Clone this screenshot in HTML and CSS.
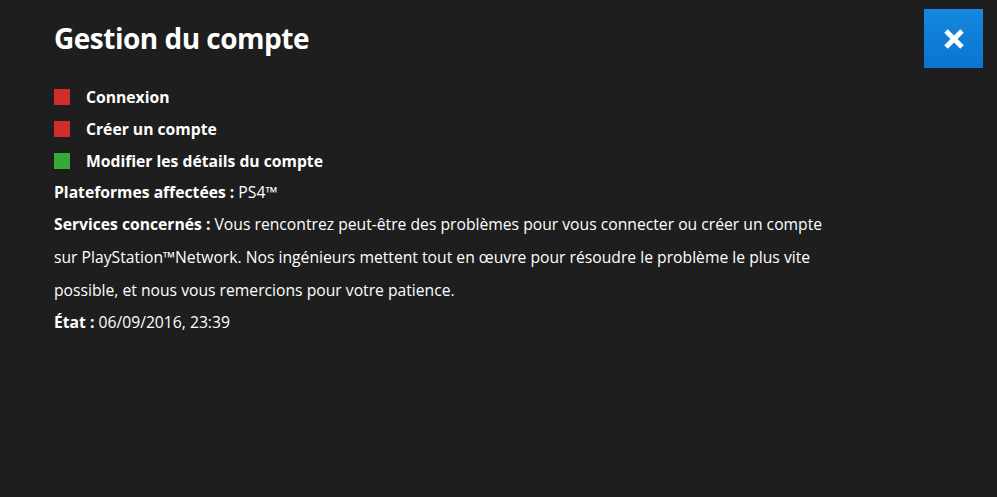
FILE: index.html
```html
<!DOCTYPE html>
<html lang="fr">
<head>
<meta charset="utf-8">
<link rel="stylesheet" href="styles.css">
</head>
<body>
<div class="panel">
  <button class="close" aria-label="Fermer">
    <svg width="22" height="22" viewBox="0 0 22 22"><path d="M3 3 L19 19 M19 3 L3 19" stroke="#fff" stroke-width="5" stroke-linecap="butt"/></svg>
  </button>
  <h1 class="title">Gestion du compte</h1>
  <ul class="services">
    <li><span class="sq red"></span>Connexion</li>
    <li><span class="sq red"></span>Créer un compte</li>
    <li><span class="sq green"></span>Modifier les détails du compte</li>
  </ul>
  <p class="info plat"><b>Plateformes affectées :</b> PS4™</p>
  <p class="info desc"><b>Services concernés :</b> Vous rencontrez peut-être des problèmes pour vous connecter ou créer un compte sur PlayStation™Network. Nos ingénieurs mettent tout en œuvre pour résoudre le problème le plus vite possible, et nous vous remercions pour votre patience.</p>
  <p class="info state"><b>État :</b> 06/09/2016, 23:39</p>
</div>
</body>
</html>
```
FILE: styles.css
```css
html, body {
  margin: 0;
  padding: 0;
  background: #1e1e1e;
  height: 100%;
}
body {
  font-family: "Open Sans", "Noto Sans", sans-serif;
  color: #fff;
}
.panel {
  position: relative;
  padding: 18px 54px 0 54px;
}
.close {
  position: absolute;
  top: 9px;
  right: 14px;
  width: 59px;
  height: 59px;
  border: 0;
  padding: 0;
  background: linear-gradient(#1488de, #0b75cf);
  display: flex;
  align-items: center;
  justify-content: center;
  cursor: pointer;
}
.title {
  margin: 0;
  font-size: 28px;
  font-weight: 700;
  line-height: 40px;
  letter-spacing: -0.5px;
}
.services {
  list-style: none;
  margin: 23px 0 0 0;
  padding: 0;
}
.services li {
  display: flex;
  align-items: center;
  height: 32px;
  font-size: 15.7px;
  font-weight: 700;
}
.sq {
  width: 16px;
  height: 16px;
  margin-right: 16px;
}
.red { background: #cf2e2e; }
.green { background: #36a936; }
.info {
  margin: 0;
  font-size: 15.7px;
  line-height: 33px;
  max-width: 785px;
}
.info b { font-weight: 700; }
.plat { line-height: 30px; }
.desc { margin-top: 1px; }
.state { line-height: 30px; }
```
